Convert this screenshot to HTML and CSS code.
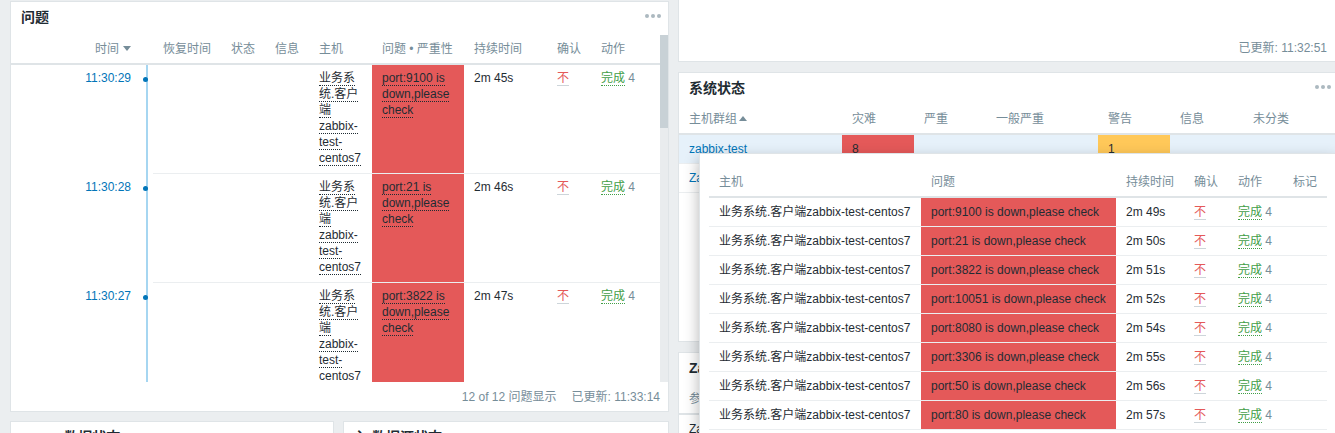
FILE: index.html
```html
<!DOCTYPE html>
<html lang="zh-CN">
<head>
<meta charset="utf-8">
<title>仪表板</title>
<link rel="stylesheet" href="styles.css">
</head>
<body>
<div class="dash">
  <div class="col">
    <section class="panel panel-problems">
      <header class="ph"><h2 class="ph-title">问题</h2><span class="dots"><i></i><i></i><i></i></span></header>
      <div class="pbody">
        <div class="pscroll">
          <table class="tbl tbl-problems">
            <colgroup>
              <col class="w-time"><col class="w-tl"><col class="w-rec"><col class="w-44"><col class="w-44"><col class="w-host"><col class="w-prob"><col class="w-dur"><col class="w-44"><col>
            </colgroup>
            <thead>
              <tr><th class="c-time">时间<span class="tri-down"></span></th><th class="c-tl"></th><th>恢复时间</th><th>状态</th><th>信息</th><th>主机</th><th>问题 • 严重性</th><th>持续时间</th><th>确认</th><th>动作</th></tr>
            </thead>
            <tbody>
              <tr>
                <td class="c-time"><span class="link">11:30:29</span></td>
                <td class="c-tl"><i class="tl-dot"></i></td>
                <td class="bd"></td><td class="bd"></td><td class="bd"></td>
                <td class="bd"><span class="ul">业务系统.客户端zabbix-test-centos7</span></td>
                <td class="bd sev-red"><span class="ul">port:9100 is down,please check</span></td>
                <td class="bd">2m 45s</td>
                <td class="bd"><span class="ack">不</span></td>
                <td class="bd"><span class="act">完成</span> <span class="muted">4</span></td>
              </tr>
              <tr>
                <td class="c-time"><span class="link">11:30:28</span></td>
                <td class="c-tl"><i class="tl-dot"></i></td>
                <td class="bd"></td><td class="bd"></td><td class="bd"></td>
                <td class="bd"><span class="ul">业务系统.客户端zabbix-test-centos7</span></td>
                <td class="bd sev-red"><span class="ul">port:21 is down,please check</span></td>
                <td class="bd">2m 46s</td>
                <td class="bd"><span class="ack">不</span></td>
                <td class="bd"><span class="act">完成</span> <span class="muted">4</span></td>
              </tr>
              <tr>
                <td class="c-time"><span class="link">11:30:27</span></td>
                <td class="c-tl"><i class="tl-dot"></i></td>
                <td class="bd"></td><td class="bd"></td><td class="bd"></td>
                <td class="bd"><span class="ul">业务系统.客户端zabbix-test-centos7</span></td>
                <td class="bd sev-red"><span class="ul">port:3822 is down,please check</span></td>
                <td class="bd">2m 47s</td>
                <td class="bd"><span class="ack">不</span></td>
                <td class="bd"><span class="act">完成</span> <span class="muted">4</span></td>
              </tr>
            </tbody>
          </table>
        </div>
        <div class="sbar"><div class="sthumb"></div></div>
      </div>
      <footer class="pfoot"><span>12 of 12 问题显示</span><span>已更新: 11:33:14</span></footer>
    </section>
    <div class="row2">
      <section class="panel panel-bl"><header class="ph"><h2 class="ph-title">·· 数据状态</h2></header></section>
      <section class="panel panel-br"><header class="ph"><h2 class="ph-title">入 数据源状态</h2></header></section>
    </div>
  </div>

  <div class="col">
    <section class="panel panel-clock">
      <span class="muted">已更新: 11:32:51</span>
    </section>
    <section class="panel panel-status">
      <header class="ph"><h2 class="ph-title">系统状态</h2><span class="dots"><i></i><i></i><i></i></span></header>
      <table class="tbl tbl-status">
        <colgroup>
          <col class="w-grp"><col class="w-72"><col class="w-72"><col class="w-112"><col class="w-72"><col class="w-73"><col>
        </colgroup>
        <thead>
          <tr><th>主机群组<span class="tri-up"></span></th><th>灾难</th><th>严重</th><th>一般严重</th><th>警告</th><th>信息</th><th>未分类</th></tr>
        </thead>
        <tbody>
          <tr class="hover">
            <td><span class="link">zabbix-test</span></td>
            <td class="sev-red">8</td><td></td><td></td>
            <td class="sev-yellow">1</td><td></td><td></td>
          </tr>
          <tr>
            <td><span class="link">Zabbix servers</span></td>
            <td></td><td></td><td></td><td></td><td></td><td></td>
          </tr>
        </tbody>
      </table>
    </section>
    <section class="panel panel-info">
      <header class="ph"><h2 class="ph-title">Zabbix服务器信息</h2></header>
      <table class="tbl tbl-info">
        <thead><tr><th>参数</th><th>值</th><th>细节</th></tr></thead>
        <tbody><tr><td>Zabbix服务器端运行中</td><td>是</td><td>localhost:10051</td></tr></tbody>
      </table>
    </section>
  </div>
</div>

<div class="hintbox">
  <table class="tbl tbl-hint">
    <colgroup>
      <col class="w-h-host"><col class="w-h-prob"><col class="w-h-dur"><col class="w-44"><col class="w-h-act"><col>
    </colgroup>
    <thead>
      <tr><th>主机</th><th>问题</th><th>持续时间</th><th>确认</th><th>动作</th><th>标记</th></tr>
    </thead>
    <tbody>
      <tr><td>业务系统.客户端zabbix-test-centos7</td><td class="sev-red">port:9100 is down,please check</td><td>2m 49s</td><td><span class="ack">不</span></td><td><span class="act">完成</span> <span class="muted">4</span></td><td></td></tr>
      <tr><td>业务系统.客户端zabbix-test-centos7</td><td class="sev-red">port:21 is down,please check</td><td>2m 50s</td><td><span class="ack">不</span></td><td><span class="act">完成</span> <span class="muted">4</span></td><td></td></tr>
      <tr><td>业务系统.客户端zabbix-test-centos7</td><td class="sev-red">port:3822 is down,please check</td><td>2m 51s</td><td><span class="ack">不</span></td><td><span class="act">完成</span> <span class="muted">4</span></td><td></td></tr>
      <tr><td>业务系统.客户端zabbix-test-centos7</td><td class="sev-red">port:10051 is down,please check</td><td>2m 52s</td><td><span class="ack">不</span></td><td><span class="act">完成</span> <span class="muted">4</span></td><td></td></tr>
      <tr><td>业务系统.客户端zabbix-test-centos7</td><td class="sev-red">port:8080 is down,please check</td><td>2m 54s</td><td><span class="ack">不</span></td><td><span class="act">完成</span> <span class="muted">4</span></td><td></td></tr>
      <tr><td>业务系统.客户端zabbix-test-centos7</td><td class="sev-red">port:3306 is down,please check</td><td>2m 55s</td><td><span class="ack">不</span></td><td><span class="act">完成</span> <span class="muted">4</span></td><td></td></tr>
      <tr><td>业务系统.客户端zabbix-test-centos7</td><td class="sev-red">port:50 is down,please check</td><td>2m 56s</td><td><span class="ack">不</span></td><td><span class="act">完成</span> <span class="muted">4</span></td><td></td></tr>
      <tr><td>业务系统.客户端zabbix-test-centos7</td><td class="sev-red">port:80 is down,please check</td><td>2m 57s</td><td><span class="ack">不</span></td><td><span class="act">完成</span> <span class="muted">4</span></td><td></td></tr>
    </tbody>
  </table>
</div>
</body>
</html>
```

FILE: styles.css
```css
* { box-sizing: border-box; }

html, body {
  margin: 0;
  padding: 0;
  background: #ebeef0;
  overflow: hidden;
  width: 1335px;
  height: 433px;
}

body {
  font-family: "Liberation Sans", "Noto Sans CJK SC", sans-serif;
  font-size: 12px;
  line-height: 16px;
  color: #1f2c33;
  position: relative;
}

.dash {
  display: flex;
  gap: 9px;
  padding-left: 10px;
  width: 1345px;
}

.col {
  width: 659px;
  flex: none;
  display: flex;
  flex-direction: column;
}

.panel {
  background: #fff;
  border: 1px solid #dfe4e7;
  overflow: hidden;
}

/* header */
.ph {
  height: 33px;
  padding: 6px 7px 9px 10px;
  display: flex;
  justify-content: space-between;
  align-items: flex-start;
}
.ph-title {
  margin: 0;
  font-size: 14px;
  font-weight: bold;
  line-height: 18px;
  color: #1f2c33;
  white-space: nowrap;
}
.dots {
  display: flex;
  gap: 2px;
  margin-top: 6px;
}
.dots i {
  width: 4px;
  height: 4px;
  border-radius: 50%;
  background: #acb9c0;
}

/* problems panel */
.panel-problems {
  margin-top: 1px;
  height: 411px;
  display: flex;
  flex-direction: column;
}
.pbody {
  height: 347px;
  display: flex;
}
.pscroll {
  flex: 1;
  overflow: hidden;
}
.sbar {
  width: 8px;
  background: #e9ecee;
}
.sthumb {
  height: 93px;
  background: #c8d1d6;
}
.pfoot {
  height: 29px;
  display: flex;
  justify-content: flex-end;
  align-items: center;
  gap: 15px;
  padding-right: 8px;
  color: #768d99;
}

/* tables */
.tbl {
  border-collapse: collapse;
  table-layout: fixed;
  width: 100%;
}
.tbl th {
  font-weight: normal;
  color: #768d99;
  text-align: left;
  white-space: nowrap;
  padding: 6px 10px;
  border-bottom: 2px solid #dfe4e7;
  line-height: 16px;
}
.tbl td {
  padding: 6px 10px;
  vertical-align: top;
  line-height: 16px;
}

.w-time { width: 129px; }
.w-tl { width: 13px; }
.w-rec { width: 68px; }
.w-44 { width: 44px; }
.w-host { width: 63px; }
.w-prob { width: 92px; }
.w-dur { width: 83px; }

.tbl-problems td { padding: 5px 10px 7px; }
.tbl-problems td.bd { border-bottom: 1px solid #ebeef0; }
.tbl-problems .c-time {
  text-align: right;
  padding-right: 9px;
}
.tbl-problems td.c-tl {
  padding: 0;
  background: linear-gradient(#a6d6f1, #a6d6f1) no-repeat center / 2px 100%;
}
.tbl-problems th.c-tl { padding: 0; }
.tl-dot {
  display: block;
  width: 5px;
  height: 5px;
  border-radius: 50%;
  background: #0275b8;
  margin: 12px auto 0;
  position: relative;
  left: -1px;
}

.tri-down, .tri-up {
  display: inline-block;
  width: 0;
  height: 0;
  border-left: 4px solid transparent;
  border-right: 4px solid transparent;
  margin-left: 4px;
  vertical-align: middle;
  position: relative;
  top: -1px;
}
.tri-down { border-top: 5px solid #768d99; }
.tri-up { border-bottom: 5px solid #768d99; margin-left: 2px; }

.link { color: #0275b8; }
.ul { border-bottom: 1px dotted #1f2c33; }
.muted { color: #768d99; }
.ack {
  color: #e45959;
  border-bottom: 1px solid #cdd5da;
}
.act {
  color: #429e47;
  border-bottom: 1px dotted #429e47;
}
.sev-red { background: #e45959; }
.sev-yellow { background: #ffc859; }

/* bottom-left panels */
.row2 {
  display: flex;
  gap: 9px;
  margin-top: 9px;
}
.panel-bl { width: 324px; height: 60px; }
.panel-br { width: 326px; height: 60px; }
.panel-bl .ph { padding-left: 40px; }

/* right column */
.panel-clock {
  height: 62px;
  border-top: none;
  display: flex;
  justify-content: flex-end;
  align-items: flex-end;
  padding: 0 9px 5px 0;
}
.panel-status {
  margin-top: 10px;
  height: 270px;
}
.panel-status .ph { padding-right: 5px; }
.w-grp { width: 163px; }
.w-72 { width: 72px; }
.w-73 { width: 73px; }
.w-112 { width: 112px; }
.tbl-status th { padding: 5px 10px 6px; }
.tbl-status td { border-bottom: 1px solid #ebeef0; }
.tbl-status tr.hover td { background: #e6f1fa; }
.tbl-status tr.hover td.sev-red { background: #e45959; }
.tbl-status tr.hover td.sev-yellow { background: #ffc859; }

.panel-info {
  margin-top: 10px;
  height: 120px;
}
.tbl-info th { padding: 5px 10px 6px; }
.tbl-info td { color: #1f2c33; }

/* hint box overlay */
.hintbox {
  position: absolute;
  left: 699px;
  top: 153px;
  width: 638px;
  background: #fff;
  border: 1px solid #dfe4e7;
  padding: 9px;
  box-shadow: 0 6px 14px 0 rgba(0, 0, 0, 0.3);
}
.w-h-host { width: 212px; }
.w-h-prob { width: 195px; }
.w-h-dur { width: 68px; }
.w-h-act { width: 55px; }
.tbl-hint th { padding: 11px 10px 6px; }
.tbl-hint td {
  border-bottom: 1px solid #ebeef0;
  white-space: nowrap;
}
```
